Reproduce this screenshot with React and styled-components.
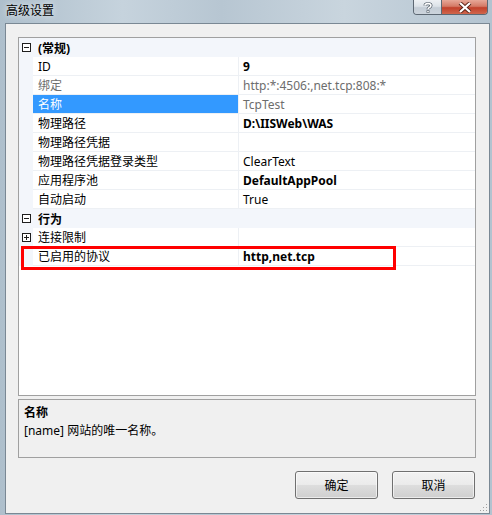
import React from "react";
import styled, { createGlobalStyle } from "styled-components";

const GlobalStyle = createGlobalStyle`
  html, body {
    margin: 0;
    padding: 0;
    overflow: hidden;
    background: #b8c8d5;
  }
  * {
    box-sizing: border-box;
  }
`;

const FONT = `"Noto Sans", "Noto Sans CJK SC", sans-serif`;

const Window = styled.div`
  width: 492px;
  height: 515px;
  display: flex;
  flex-direction: column;
  font-family: ${FONT};
  font-size: 12px;
  color: #000;
  background: linear-gradient(
    90deg,
    #aebfcc 0%,
    #c6d3dd 25%,
    #b7c6d2 45%,
    #c9d5de 70%,
    #b3c3d0 100%
  );
`;

const TitleBar = styled.div`
  height: 23px;
  display: flex;
  align-items: flex-start;
  padding: 0 4px 0 6px;
`;

const Title = styled.div`
  line-height: 14px;
  margin-top: 4px;
  font-size: 12px;
  color: #000;
  text-shadow: 0 0 6px rgba(255, 255, 255, 0.9);
`;

const CaptionButtons = styled.div`
  margin-left: auto;
  display: flex;
  height: 15px;
  border: 1px solid #5d6873;
  border-top: none;
  border-radius: 0 0 4px 4px;
  overflow: hidden;
`;

const CaptionButton = styled.div`
  width: ${(p) => p.$width}px;
  height: 100%;
  display: flex;
  align-items: center;
  justify-content: center;
  background: ${(p) =>
    p.$close
      ? "linear-gradient(180deg, #e7a898 0%, #d47a66 45%, #c2412b 55%, #d0664c 100%)"
      : "linear-gradient(180deg, #eef1f4 0%, #dce2e8 45%, #c4cdd6 55%, #ccd4dc 100%)"};
  & + & {
    border-left: 1px solid #5d6873;
  }
`;

const Client = styled.div`
  position: relative;
  flex: 1;
  margin: 0 2px 1px 5px;
  border: 1px solid #7a8894;
  background: #f0f0f0;
  padding: 13px 13px 14px 12px;
  display: flex;
  flex-direction: column;
`;

const Grid = styled.div`
  position: relative;
  height: 359px;
  border: 1px solid #a0a0a0;
  background: #fff;
`;

const Row = styled.div`
  display: grid;
  grid-template-columns: 14px 205px 1fr;
  height: 19px;
`;

const Gutter = styled.div`
  background: #f3f6fb;
  display: flex;
  align-items: center;
  justify-content: center;
  padding-left: 1px;
`;

const CategoryLabel = styled.div`
  grid-column: 2 / 4;
  background: #f3f6fb;
  font-weight: 700;
  line-height: 17px;
  padding: 2px 0 0 5px;
  overflow: hidden;
`;

const NameCell = styled.div`
  line-height: 16px;
  padding: 2px 0 0 5px;
  border-bottom: 1px solid #edf0f4;
  white-space: nowrap;
  overflow: hidden;
  background: ${(p) => (p.$selected ? "#3399ff" : "#fff")};
  color: ${(p) => (p.$selected ? "#fff" : p.$muted ? "#6d6d6d" : "#000")};
`;

const ValueCell = styled.div`
  line-height: 16px;
  padding: 2px 0 0 4px;
  border-left: 1px solid #edf0f4;
  border-bottom: 1px solid #edf0f4;
  white-space: nowrap;
  overflow: hidden;
  font-weight: ${(p) => (p.$bold ? 700 : 400)};
  color: ${(p) => (p.$muted ? "#6d6d6d" : "#000")};
`;

const Highlight = styled.div`
  position: absolute;
  left: 2px;
  top: 208px;
  width: 375px;
  height: 24px;
  border: 3px solid #ff0000;
  pointer-events: none;
`;

const Description = styled.div`
  margin-top: 3px;
  height: 59px;
  border: 1px solid #a0a0a0;
  padding: 4px 5px 0;
  line-height: 18px;
`;

const DescTitle = styled.div`
  font-weight: 700;
`;

const Footer = styled.div`
  margin-top: 13px;
  display: flex;
  justify-content: flex-end;
  gap: 14px;
  padding-right: 1px;
`;

const Button = styled.button`
  width: 83px;
  height: 28px;
  font-family: ${FONT};
  font-size: 12px;
  color: #000;
  border: 1px solid #707070;
  border-radius: 3px;
  background: linear-gradient(
    180deg,
    #f2f2f2 0%,
    #ebebeb 48%,
    #dddddd 52%,
    #cfcfcf 100%
  );
  box-shadow: inset 0 0 0 1px rgba(255, 255, 255, 0.6);
  padding: 0;
  cursor: default;
`;

const Grip = styled.svg`
  position: absolute;
  right: 1px;
  bottom: 1px;
`;

const ExpandBox = ({ open }) => (
  <svg width="9" height="9" viewBox="0 0 9 9">
    <rect x="0.5" y="0.5" width="8" height="8" fill="#fff" stroke="#1e1e1e" />
    <line x1="2" y1="4.5" x2="7" y2="4.5" stroke="#1e1e1e" />
    {!open && <line x1="4.5" y1="2" x2="4.5" y2="7" stroke="#1e1e1e" />}
  </svg>
);

const groups = [
  {
    title: "(常规)",
    items: [
      { name: "ID", value: "9", bold: true },
      { name: "绑定", value: "http:*:4506:,net.tcp:808:*", muted: true },
      { name: "名称", value: "TcpTest", muted: true, selected: true },
      { name: "物理路径", value: "D:\\IISWeb\\WAS", bold: true },
      { name: "物理路径凭据", value: "" },
      { name: "物理路径凭据登录类型", value: "ClearText" },
      { name: "应用程序池", value: "DefaultAppPool", bold: true },
      { name: "自动启动", value: "True" },
    ],
  },
  {
    title: "行为",
    items: [
      { name: "连接限制", value: "", expandable: true },
      { name: "已启用的协议", value: "http,net.tcp", bold: true },
    ],
  },
];

const App = () => {
  return (
    <>
      <GlobalStyle />
      <Window>
        <TitleBar>
          <Title>高级设置</Title>
          <CaptionButtons>
            <CaptionButton $width={27}>
              <svg width="10" height="11" viewBox="0 0 10 11">
                <path
                  d="M2 3.5 C2 1 8 1 8 3.5 C8 5.5 5 5.5 5 7.2"
                  fill="none"
                  stroke="#4a5560"
                  strokeWidth="3"
                />
                <path
                  d="M2 3.5 C2 1 8 1 8 3.5 C8 5.5 5 5.5 5 7.2"
                  fill="none"
                  stroke="#fff"
                  strokeWidth="1.6"
                />
                <rect x="3.6" y="8.3" width="2.8" height="2.5" fill="#4a5560" />
                <rect x="4.2" y="8.9" width="1.6" height="1.4" fill="#fff" />
              </svg>
            </CaptionButton>
            <CaptionButton $width={46} $close>
              <svg width="14" height="11" viewBox="0 0 14 11">
                <path d="M2 1 L12 10 M12 1 L2 10" stroke="#5a2418" strokeWidth="4" />
                <path d="M2 1 L12 10 M12 1 L2 10" stroke="#fff" strokeWidth="2.2" />
              </svg>
            </CaptionButton>
          </CaptionButtons>
        </TitleBar>
        <Client>
          <Grid>
            {groups.map((group) => (
              <React.Fragment key={group.title}>
                <Row>
                  <Gutter>
                    <ExpandBox open />
                  </Gutter>
                  <CategoryLabel>{group.title}</CategoryLabel>
                </Row>
                {group.items.map((item) => (
                  <Row key={item.name}>
                    <Gutter>{item.expandable && <ExpandBox />}</Gutter>
                    <NameCell $selected={item.selected} $muted={item.muted}>
                      {item.name}
                    </NameCell>
                    <ValueCell $bold={item.bold} $muted={item.muted}>
                      {item.value}
                    </ValueCell>
                  </Row>
                ))}
              </React.Fragment>
            ))}
            <Highlight />
          </Grid>
          <Description>
            <DescTitle>名称</DescTitle>
            <div>[name] 网站的唯一名称。</div>
          </Description>
          <Footer>
            <Button>确定</Button>
            <Button>取消</Button>
          </Footer>
          <Grip width="10" height="10" viewBox="0 0 10 10">
            {[
              [8, 2],
              [8, 5],
              [5, 5],
              [8, 8],
              [5, 8],
              [2, 8],
            ].map(([x, y]) => (
              <rect key={`${x}-${y}`} x={x} y={y} width="1" height="1" fill="#a0a0a0" />
            ))}
          </Grip>
        </Client>
      </Window>
    </>
  );
};

export default App;
